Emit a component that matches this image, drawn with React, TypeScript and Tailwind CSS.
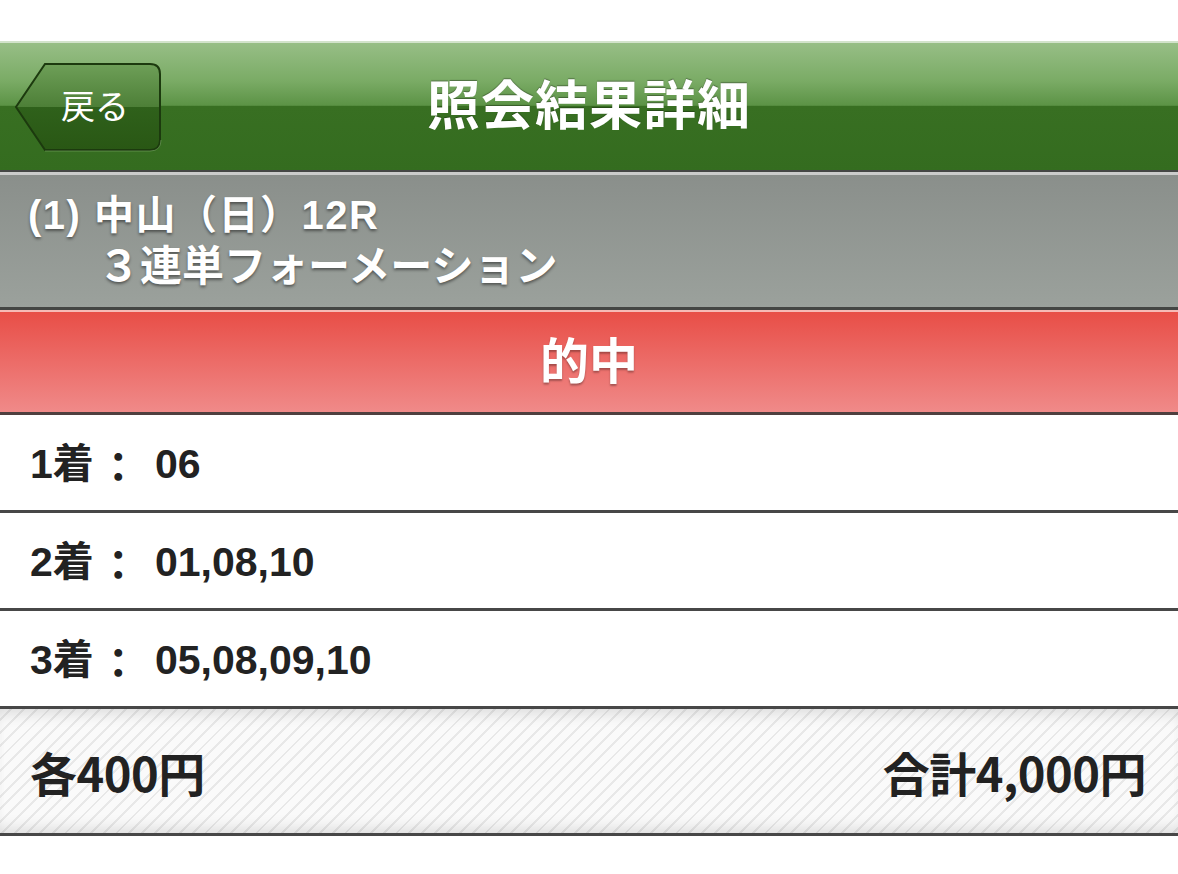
const font = "font-['Liberation_Sans','Noto_Sans_CJK_JP',sans-serif]";

const placings = [
  { label: "1着", value: "06" },
  { label: "2着", value: "01,08,10" },
  { label: "3着", value: "05,08,09,10" },
];

function BackButton() {
  return (
    <button className="relative ml-[14px] flex h-[90px] w-[148px] items-center justify-center pl-[14px]">
      <svg className="absolute inset-0" width="148" height="90" viewBox="0 0 148 90">
        <defs>
          <linearGradient id="back-fill" x1="0" y1="0" x2="0" y2="1">
            <stop offset="0" stopColor="#6e9f58" />
            <stop offset="0.5" stopColor="#4d7f37" />
            <stop offset="0.5" stopColor="#2f611b" />
            <stop offset="1" stopColor="#295714" />
          </linearGradient>
        </defs>
        <path d="M31,2 H136 Q146,2 146,12 V78 Q146,88 136,88 H31 L2,45 Z" fill="url(#back-fill)" stroke="#1c3a0e" strokeWidth="2" />
        <path d="M31,89 H136 Q147,89 147,78" fill="none" stroke="#7aa865" strokeWidth="1" opacity="0.6" />
      </svg>
      <span className="relative text-[34px] leading-none text-white">戻る</span>
    </button>
  );
}

export default function App() {
  return (
    <div className={`min-h-[874px] bg-white ${font}`}>
      <div className="h-[41px]" />

      <header className="grid h-[131px] grid-cols-[1fr_auto_1fr] items-center border-t-2 border-b-2 border-t-[#d2e3cb] border-b-[#454745] bg-[linear-gradient(to_bottom,#97be86_0%,#7aab65_30%,#5c9346_49%,#386f22_50%,#346c1f_100%)]">
        <div className="flex items-center">
          <BackButton />
        </div>
        <h1 className="text-[53px] font-bold leading-none tracking-[1px] text-white [text-shadow:0_-1px_1px_rgba(0,0,0,0.35)]">
          照会結果詳細
        </h1>
        <div />
      </header>

      <section className="h-[138px] border-t-[3px] border-b-[3px] border-t-[#cbcccb] border-b-[#444644] bg-[linear-gradient(to_bottom,#8a8f8b,#9ba19c)] pl-[28px] pt-[16px] font-bold text-white [text-shadow:0_2px_3px_rgba(0,0,0,0.45)]">
        <div className="text-[40px] leading-[48px] tracking-[1.5px]">(1) 中山（日）12R</div>
        <div className="pl-[70px] text-[42px] leading-[56px]">３連単フォーメーション</div>
      </section>

      <section className="flex h-[105px] items-center justify-center border-t-2 border-b-[3px] border-t-[#f6bab6] border-b-[#4e3f3f] bg-[linear-gradient(to_bottom,#e84e47,#f08a89)]">
        <span className="text-[49px] font-bold leading-none text-white [text-shadow:0_2px_2px_rgba(0,0,0,0.3)]">的中</span>
      </section>

      {placings.map((row) => (
        <div key={row.label} className="flex h-[98px] items-center border-b-[3px] border-[#474747] pl-[30px] pt-[4px] text-[41px] font-bold text-[#222]">
          <span className="flex w-[125px] items-center">
            {row.label}
            <span className="ml-[4px] translate-y-[4px]">：</span>
          </span>
          <span>{row.value}</span>
        </div>
      ))}

      <footer className="flex h-[127px] items-center justify-between border-b-[3px] border-[#474747] bg-[repeating-linear-gradient(135deg,#fafafa_0px,#fafafa_7px,#e8e8e8_7px,#e8e8e8_9px)] pl-[30px] pr-[32px] pt-[2px] font-['Noto_Sans_CJK_JP',sans-serif] text-[47px] font-bold tracking-[-0.5px] text-[#222] shadow-[inset_0_14px_16px_-10px_rgba(0,0,0,0.13),inset_0_-14px_16px_-10px_rgba(0,0,0,0.13)]">
        <span>各400円</span>
        <span>合計4,000円</span>
      </footer>
    </div>
  );
}
